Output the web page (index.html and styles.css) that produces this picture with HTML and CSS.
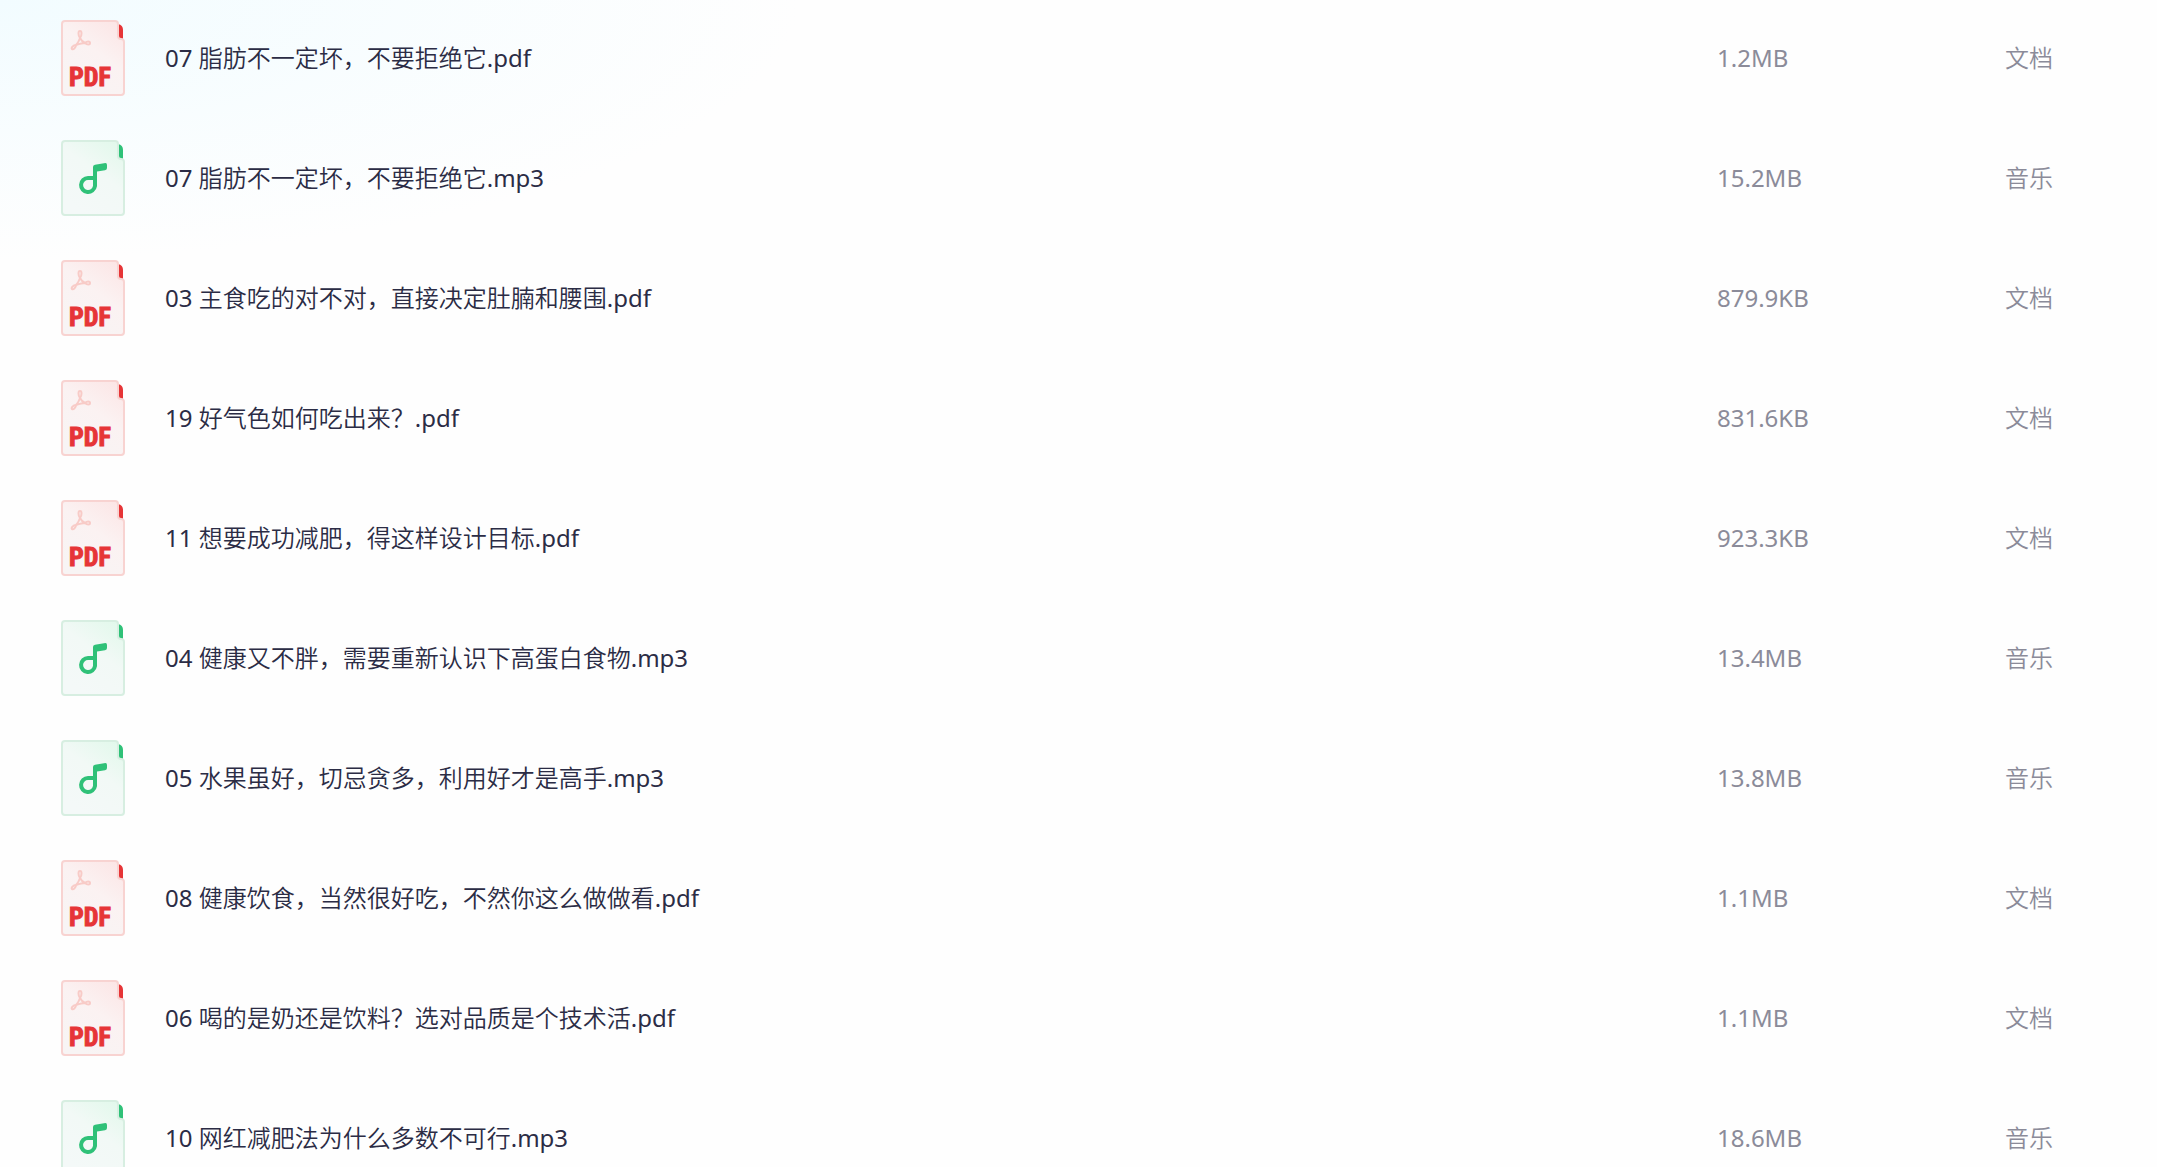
FILE: index.html
```html
<!DOCTYPE html>
<html lang="zh-CN">
<head>
<meta charset="utf-8">
<meta name="viewport" content="width=device-width, initial-scale=1">
<title>文件列表</title>
<link rel="stylesheet" href="styles.css">
</head>
<body>
<svg class="sprite" aria-hidden="true">
  <defs>
    <linearGradient id="red-paper" x1="1" y1="0" x2="0.4" y2="1">
      <stop offset="0" stop-color="#fce4e4"/><stop offset="0.5" stop-color="#fbf2f2"/><stop offset="1" stop-color="#f8f4f4"/>
    </linearGradient>
    <linearGradient id="green-paper" x1="1" y1="0" x2="0.4" y2="1">
      <stop offset="0" stop-color="#e0f8ea"/><stop offset="0.5" stop-color="#f2f9f6"/><stop offset="1" stop-color="#f4f9f8"/>
    </linearGradient>
    <symbol id="icon-pdf" viewBox="0 0 64 76">
      <path d="M57 4Q62 5 62 10V19H60Q57 18 57 15Z" fill="#e63537"/>
      <path d="M4 1H54Q57 1 57 4V16Q57 19 60 19Q63 19 63 22V72Q63 75 60 75H4Q1 75 1 72V4Q1 1 4 1Z" fill="url(#red-paper)" stroke="#f8d3d1" stroke-width="2"/>
      <path d="M19 18C17 15 17 11 19 11C21 11 21 15 19 18C20 20 22 22 24 23C26 21 29 21 29 23C29 25 26 25 24 23C21 23 18 24 15 25C15 28 12 30 11 29C10 28 12 25 15 25C17 23 18 21 19 18" fill="none" stroke="#f8cbc7" stroke-width="2" stroke-linecap="round" stroke-linejoin="round"/>
      <text class="pdf-label" x="29" y="66" text-anchor="middle">PDF</text>
    </symbol>
    <symbol id="icon-music" viewBox="0 0 64 76">
      <path d="M57 4Q62 5 62 10V19H60Q57 18 57 15Z" fill="#2fc178"/>
      <path d="M4 1H54Q57 1 57 4V16Q57 19 60 19Q63 19 63 22V72Q63 75 60 75H4Q1 75 1 72V4Q1 1 4 1Z" fill="url(#green-paper)" stroke="#d7eee1" stroke-width="2"/>
      <path d="M34 38H27A7 7 0 1 0 34 46V28" fill="none" stroke="#2fc178" stroke-width="4"/>
      <path d="M32 27Q32 25 34 24.700L44.500 23Q46 23 46 25V28Q46 30 44 30.300L36 31.500H32Z" fill="#2fc178"/>
    </symbol>
  </defs>
</svg>
<main class="files">
  <table class="file-table">
    <colgroup><col class="col-icon"><col><col class="col-size"><col class="col-type"></colgroup>
    <tbody>
      <tr><td class="icon-cell"><svg class="icon" role="img" aria-label="PDF"><use href="#icon-pdf"/></svg></td><td class="name">07 脂肪不一定坏，不要拒绝它.pdf</td><td>1.2MB</td><td>文档</td></tr>
      <tr><td class="icon-cell"><svg class="icon" role="img" aria-label="MP3"><use href="#icon-music"/></svg></td><td class="name">07 脂肪不一定坏，不要拒绝它.mp3</td><td>15.2MB</td><td>音乐</td></tr>
      <tr><td class="icon-cell"><svg class="icon" role="img" aria-label="PDF"><use href="#icon-pdf"/></svg></td><td class="name">03 主食吃的对不对，直接决定肚腩和腰围.pdf</td><td>879.9KB</td><td>文档</td></tr>
      <tr><td class="icon-cell"><svg class="icon" role="img" aria-label="PDF"><use href="#icon-pdf"/></svg></td><td class="name">19 好气色如何吃出来？.pdf</td><td>831.6KB</td><td>文档</td></tr>
      <tr><td class="icon-cell"><svg class="icon" role="img" aria-label="PDF"><use href="#icon-pdf"/></svg></td><td class="name">11 想要成功减肥，得这样设计目标.pdf</td><td>923.3KB</td><td>文档</td></tr>
      <tr><td class="icon-cell"><svg class="icon" role="img" aria-label="MP3"><use href="#icon-music"/></svg></td><td class="name">04 健康又不胖，需要重新认识下高蛋白食物.mp3</td><td>13.4MB</td><td>音乐</td></tr>
      <tr><td class="icon-cell"><svg class="icon" role="img" aria-label="MP3"><use href="#icon-music"/></svg></td><td class="name">05 水果虽好，切忌贪多，利用好才是高手.mp3</td><td>13.8MB</td><td>音乐</td></tr>
      <tr><td class="icon-cell"><svg class="icon" role="img" aria-label="PDF"><use href="#icon-pdf"/></svg></td><td class="name">08 健康饮食，当然很好吃，不然你这么做做看.pdf</td><td>1.1MB</td><td>文档</td></tr>
      <tr><td class="icon-cell"><svg class="icon" role="img" aria-label="PDF"><use href="#icon-pdf"/></svg></td><td class="name">06 喝的是奶还是饮料？选对品质是个技术活.pdf</td><td>1.1MB</td><td>文档</td></tr>
      <tr><td class="icon-cell"><svg class="icon" role="img" aria-label="MP3"><use href="#icon-music"/></svg></td><td class="name">10 网红减肥法为什么多数不可行.mp3</td><td>18.6MB</td><td>音乐</td></tr>
    </tbody>
  </table>
</main>
</body>
</html>
```
FILE: styles.css
```css
body {
  margin: 0;
  background: radial-gradient(ellipse 800px 260px at 0 0, #f2fcff, #fefefe) #fefefe;
  background-repeat: no-repeat;
  font-family: "Noto Sans", "Noto Sans CJK SC DemiLight", "Noto Sans CJK SC", sans-serif;
  font-size: 24px;
  font-weight: 400;
  line-height: 32px;
  color: #8b8b99;
}

.sprite {
  position: absolute;
  width: 0;
  height: 0;
}

.files {
  height: 100vh;
  overflow: auto;
  scrollbar-width: none;
}

.file-table {
  width: 100%;
  table-layout: fixed;
  border-collapse: collapse;
}

.col-icon { width: 165px; }
.col-size { width: 288px; }
.col-type { width: 152px; }

td {
  height: 80px;
  padding: 18px 0 22px;
  vertical-align: middle;
}

.icon-cell { padding-left: 61px; }

.name {
  color: #2b2c45;
  white-space: nowrap;
  overflow: hidden;
  text-overflow: ellipsis;
}

.icon {
  display: block;
  width: 64px;
  height: 76px;
}

.pdf-label {
  font-family: "Liberation Sans Narrow", "Roboto Condensed", "Open Sans Condensed", Roboto, sans-serif;
  font-size: 26px;
  font-weight: 700;
  fill: #e63537;
  stroke: #e63537;
  stroke-width: 1px;
}
```
